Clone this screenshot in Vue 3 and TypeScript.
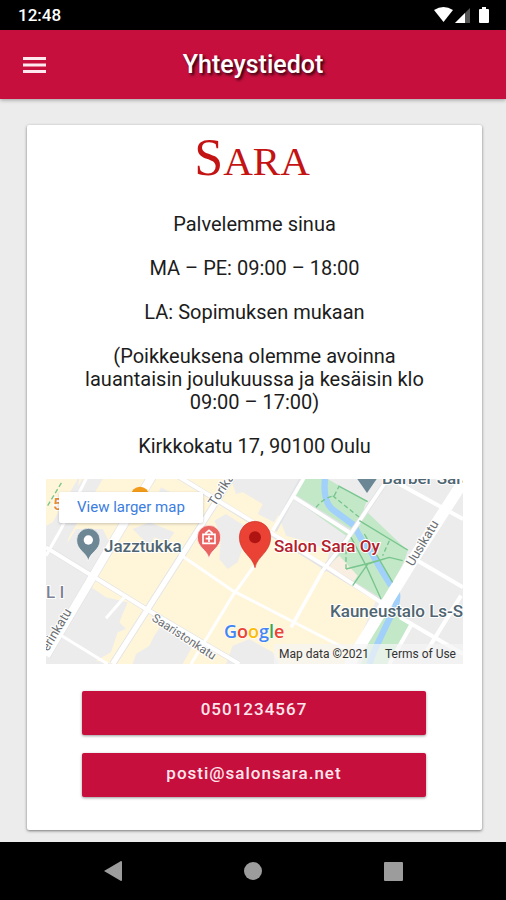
<script setup lang="ts">
interface Paragraph {
  id: number
  text: string
}

interface Contact {
  href: string
  label: string
  raised: boolean
}

const paragraphs: Paragraph[] = [
  { id: 1, text: 'Palvelemme sinua' },
  { id: 2, text: 'MA – PE: 09:00 – 18:00' },
  { id: 3, text: 'LA: Sopimuksen mukaan' },
  { id: 4, text: '(Poikkeuksena olemme avoinna lauantaisin joulukuussa ja kesäisin klo 09:00 – 17:00)' },
  { id: 5, text: 'Kirkkokatu 17, 90100 Oulu' },
]

const contacts: Contact[] = [
  { href: 'tel:0501234567', label: '0501234567', raised: true },
  { href: 'mailto:posti@salonsara.net', label: 'posti@salonsara.net', raised: false },
]
</script>

<template>
  <div class="screen">
    <div class="status">
      <span class="clock">12:48</span>
      <svg class="status-icons" width="58" height="18" viewBox="0 0 58 18" aria-hidden="true">
        <path d="M1 4 Q10.500 -2 20 4 L10.500 16 Z" fill="#fff" />
        <path d="M37 2 V17 H22 Z" fill="#555" />
        <path d="M32 7 V17 H22 Z" fill="#fff" />
        <path d="M49 1 h4 v2 h2 q1 0 1 1 v12 q0 1 -1 1 h-8 q-1 0 -1 -1 v-12 q0 -1 1 -1 h2 z" fill="#fff" />
      </svg>
    </div>

    <header class="appbar">
      <button class="menu" type="button" aria-label="Menu">
        <svg width="24" height="18" viewBox="0 0 24 18" aria-hidden="true">
          <path d="M0 2.500 H23 M0 9 H23 M0 15.500 H23" stroke="#ffe9ee" stroke-width="2.800" />
        </svg>
      </button>
      <h1>Yhteystiedot</h1>
    </header>

    <main class="content">
      <section class="card">
        <div class="logo"><span class="logo-initial">S</span>ARA</div>

        <div class="info">
          <p v-for="p in paragraphs" :key="p.id">{{ p.text }}</p>
        </div>

        <div class="map">
          <svg class="map-canvas" viewBox="0 0 417 185" role="img" aria-label="Salon Sara Oy">
            <svg width="417" height="185" viewBox="0 0 1251 555">
              <rect width="1251" height="555" fill="#ececed" />
              <g fill="#fff5d9">
                <path d="M0 0 H95 L20 130 L0 140 Z" />
                <path d="M100 0 H380 L800 250 L990 365 L905 555 H390 L415 470 L320 410 L290 440 L310 460 L265 555 H205 L150 545 L195 520 L215 460 L240 450 L220 430 L245 370 L180 355 L130 320 L150 285 L95 265 L100 240 L60 215 Z" />
                <path d="M380 0 H560 L640 60 L690 90 L720 170 L790 190 L850 215 L840 270 L700 200 L540 100 Z" />
              </g>
              <g fill="#ececed">
                <path d="M345 25 L430 70 L425 120 L350 130 L320 90 Z" />
                <path d="M505 125 L540 105 L610 150 L575 250 L545 270 L520 240 L525 170 Z" />
                <path d="M260 150 L310 130 L385 160 L365 190 L325 175 L310 200 Z" />
                <path d="M555 0 H750 L685 130 L635 105 L650 75 L590 40 L570 45 Z" />
                <path d="M345 445 L440 500 L410 555 H240 L290 455 Z" />
                <path d="M560 500 L610 480 L680 520 L700 555 H540 Z" />
                <path d="M110 0 H170 L60 190 L20 200 L30 130 Z" />
                <path d="M50 215 L90 150 L170 150 L190 190 L140 280 L95 262 Z" />
              </g>
              <path d="M205 555 L310 405 L345 440 L325 470 L310 500 L270 525 L260 555 Z" fill="#fff5d9" />
              <g fill="#c3e8c8">
                <path d="M775 0 H845 L880 20 L1085 215 L1075 245 L1010 375 L840 270 L900 170 L745 60 Z" />
                <path d="M1000 395 H1050 L1095 430 L1025 555 H945 Z" />
              </g>
              <path d="M880 0 L1090 215 L1120 150 L1190 80 L1210 0 Z" fill="#ececed" />
              <path d="M872 20 L962 66 L940 125 L1088 212 L1065 240 L1040 210 L900 170 L905 135 L845 60 Z" fill="#c3e8c8" />
              <path d="M835 270 L880 230 L935 290 L915 320 Z" fill="#f8eee1" />
              <path d="M837 0 Q830 65 858 90 L925 140 Q945 185 970 210 Q1000 265 1035 320 M1052 340 Q1060 370 1030 420 L985 515 L970 555" fill="none" stroke="#a1d0fb" stroke-width="19" />

              <g fill="none" stroke="#e2e3e5" stroke-width="16">
                <path d="M0 205 L300 390 L580 555 M385 -15 L1010 370 M745 55 L915 160" />
                <path d="M770 -5 L685 155 M1025 0 L900 185 L830 275" />
                <path d="M570 -25 L200 555" stroke-width="21" />
                <path d="M325 -20 L0 530" stroke-width="29" />
              </g>
              <g fill="none" stroke="#fff">
                <path d="M325 -20 L0 530" stroke-width="25" />
                <path d="M570 -25 L200 555" stroke-width="16" />
                <path d="M0 205 L300 390 L580 555 M385 -15 L840 262 L1005 370" stroke-width="12" />
                <path d="M130 -20 L45 150 L0 230 M400 225 L560 335 L900 510 M625 260 L560 350 L435 555 M235 355 L180 418 M30 460 L185 555" stroke-width="9" />
                <path d="M775 -5 L680 155 M745 55 L910 160 M1025 0 L900 185 L830 275 L735 445" stroke-width="11" />
                <path d="M1260 -5 L1115 220 L930 520 L910 560" stroke-width="34" />
                <path d="M1060 15 L1251 120 M1115 245 L1251 325 M1062 415 L1251 525 M1100 430 L1030 555 M1245 350 L1140 520" stroke-width="12" />
              </g>
              <g fill="none" stroke="#78c58d" stroke-width="4">
                <path d="M880 22 L965 68 M940 125 L1085 213 M915 175 L960 260 L1005 360 M955 165 L1005 250 L1040 310 M920 320 L965 255 L1030 235 L1070 245 M900 270 L960 255 L1030 235" />
                <path d="M810 85 Q835 55 865 50 L880 20 M860 50 L940 115 M900 270 V210 L925 190 M1030 185 L1010 230 M5 80 L50 5" stroke-dasharray="14 8" />
              </g>

              <circle cx="282" cy="50" r="27" fill="#f29a19" />
              <path d="M934 0 H992 L963 42 Z" fill="#6b8796" />
              <path d="M127 247 C122 218 92 216 92 183 A35 35 0 0 1 162 183 C162 216 132 218 127 247 Z" fill="#6e8795" stroke="#fff" stroke-width="2" />
              <circle cx="127" cy="183" r="14" fill="#fff" />
              <path d="M489 240 C484 210 454 208 454 174 A35 35 0 0 1 524 174 C524 208 494 210 489 240 Z" fill="#e96361" stroke="#fff" stroke-width="2" />
              <path d="M471 166 H507 V193 H471 Z M478 163 L489 154 L500 163 M489 170 V189 M479 179 H499" fill="none" stroke="#fff" stroke-width="5" />
              <path d="M627 266 C621 232 580 220 580 174 A47 47 0 0 1 674 174 C674 220 633 232 627 266 Z" fill="#ea4335" stroke="#cf3529" stroke-width="2" />
              <circle cx="627" cy="175" r="18" fill="#b01412" />
            </svg>

            <g class="place">
              <text x="58" y="73">Jazztukka</text>
              <text x="336" y="5">Barber Sara</text>
              <text x="284" y="138">Kauneustalo Ls-S</text>
              <text class="place-main" x="228" y="73">Salon Sara Oy</text>
              <text class="district" x="0" y="119">L I</text>
              <text class="shop" x="7" y="31">5</text>
            </g>
            <g class="street">
              <text transform="translate(169 28) rotate(-57)">Torikatu</text>
              <text transform="translate(367 88) rotate(-59)">Uusikatu</text>
              <text transform="translate(2 173) rotate(-59)">erinkatu</text>
              <text class="minor" transform="translate(105 141) rotate(33)">Saaristonkatu</text>
            </g>
            <text class="brand" x="178" y="159"><tspan fill="#4285f4">G</tspan><tspan fill="#ea4335">o</tspan><tspan fill="#fbbc05">o</tspan><tspan fill="#4285f4">g</tspan><tspan fill="#34a853">l</tspan><tspan fill="#ea4335">e</tspan></text>
          </svg>
          <a class="larger" href="#map">View larger map</a>
          <div class="legal">
            <span>Map data ©2021</span>
            <a href="#terms">Terms of Use</a>
          </div>
        </div>

        <div class="actions">
          <a
            v-for="c in contacts"
            :key="c.href"
            class="action"
            :class="{ raised: c.raised }"
            :href="c.href"
          >{{ c.label }}</a>
        </div>
      </section>
    </main>

    <nav class="system" aria-label="System">
      <button type="button" aria-label="Back">
        <svg width="20" height="22" viewBox="0 0 20 22"><path d="M1 11 L18 1 Q19 1 19 2 V20 Q19 21 18 21 Z" /></svg>
      </button>
      <button type="button" aria-label="Home">
        <svg width="20" height="22" viewBox="0 0 20 22"><circle cx="10" cy="11" r="9" /></svg>
      </button>
      <button type="button" aria-label="Recent apps">
        <svg width="20" height="22" viewBox="0 0 20 22"><rect x="1" y="2" width="19" height="19" rx="1" /></svg>
      </button>
    </nav>
  </div>
</template>

<style>
body {
  margin: 0;
  background: #ececec;
}
</style>

<style scoped>
.screen {
  display: flex;
  flex-direction: column;
  min-height: 100vh;
  box-sizing: border-box;
  font-family: Roboto, "Liberation Sans", sans-serif;
  color: #1c1c1c;
  background: #ececec;
}

.status {
  display: flex;
  align-items: center;
  justify-content: space-between;
  height: 30px;
  padding: 0 15px 0 18px;
  background: #000;
  color: #fff;
}

.clock {
  font-size: 17px;
  font-weight: 500;
  line-height: 32px;
}

.appbar {
  display: grid;
  grid-template-columns: 69px 1fr 69px;
  align-items: center;
  height: 69px;
  background: #c60f3d;
  box-shadow: 0 1px 4px rgba(0, 0, 0, 0.35);
}

.menu {
  display: flex;
  justify-content: center;
  padding: 12px;
  border: 0;
  background: none;
}

h1 {
  margin: 0;
  text-align: center;
  font-size: 25px;
  font-weight: 500;
  line-height: 32px;
  color: #fff;
  text-shadow: 2px 2px 3px rgba(0, 0, 0, 0.8);
}

.content {
  flex: 1;
  padding: 26px 24px 12px 27px;
}

.card {
  padding: 3px 19px 33px;
  background: #fff;
  border-radius: 2px;
  box-shadow: 0 1px 3px rgba(0, 0, 0, 0.5);
}

.logo {
  padding-right: 5px;
  text-align: center;
  font-family: "Liberation Serif", serif;
  font-size: 41px;
  line-height: 60px;
  color: #c31313;
}

.logo-initial {
  font-size: 52px;
}

.info {
  padding: 22px 32px 21px;
  text-align: center;
  font-size: 20px;
  line-height: 23px;
}

.info p {
  margin: 0 0 21px;
}

.info p:last-child {
  margin: 0;
}

.map {
  position: relative;
  overflow: hidden;
}

.map-canvas {
  display: block;
  width: 100%;
  height: auto;
}

.place text {
  font-size: 17px;
  font-weight: 500;
  fill: #4f6571;
  stroke: #fff;
  stroke-width: 2px;
  paint-order: stroke;
}

.place .place-main {
  fill: #b3202b;
}

.place .district {
  fill: #7c8296;
}

.place .shop {
  fill: #e58a3c;
}

.street text {
  font-size: 13px;
  fill: #6c6f73;
  stroke: #fff;
  stroke-width: 2px;
  paint-order: stroke;
}

.street .minor {
  font-size: 12px;
}

.brand {
  font-family: "Open Sans", sans-serif;
  font-size: 18px;
  font-weight: 600;
  stroke: #fff;
  stroke-width: 1px;
  paint-order: stroke;
}

.larger {
  position: absolute;
  top: 13px;
  left: 13px;
  padding: 0 18px;
  background: #fff;
  border-radius: 2px;
  box-shadow: 0 1px 3px rgba(0, 0, 0, 0.2);
  font-size: 15px;
  line-height: 31px;
  color: #3b7de0;
  text-decoration: none;
}

.legal {
  position: absolute;
  right: 0;
  bottom: 0;
  display: flex;
  gap: 16px;
  padding: 0 7px 0 5px;
  background: rgba(245, 245, 245, 0.7);
  font-size: 12px;
  line-height: 20px;
  color: #333;
}

.legal a {
  color: inherit;
  text-decoration: none;
}

.actions {
  display: flex;
  flex-direction: column;
  gap: 18px;
  padding: 27px 37px 0 36px;
}

.action {
  padding: 8px 0 12px;
  background: #c60f3d;
  border-radius: 2px;
  box-shadow: 0 1px 3px rgba(0, 0, 0, 0.4);
  text-align: center;
  font-size: 17px;
  font-weight: 500;
  line-height: 24px;
  letter-spacing: 1px;
  color: #ffe6ec;
  text-decoration: none;
}

.action.raised {
  padding: 6px 0 14px;
}

.system {
  display: flex;
  align-items: center;
  justify-content: center;
  gap: 100px;
  height: 58px;
  background: #000;
}

.system button {
  display: flex;
  padding: 0 10px;
  border: 0;
  background: none;
}

.system svg {
  fill: #9c9c9c;
}
</style>
